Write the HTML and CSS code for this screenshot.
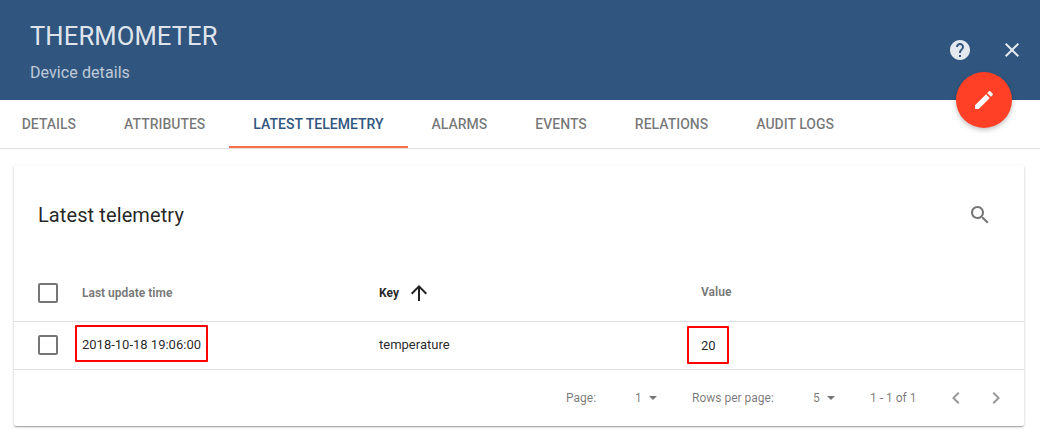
FILE: index.html
```html
<!DOCTYPE html>
<html lang="en">
<head>
<meta charset="utf-8">
<title>Device details</title>
<link rel="stylesheet" href="styles.css">
</head>
<body>
<header class="toolbar">
  <div class="heading">
    <h1 class="title">THERMOMETER</h1>
    <p class="subtitle">Device details</p>
  </div>
  <div class="actions">
    <svg class="icon" viewBox="0 0 24 24"><path d="M12 2C6.48 2 2 6.48 2 12s4.48 10 10 10 10-4.48 10-10S17.52 2 12 2zm1 17h-2v-2h2v2zm2.07-7.75l-.9.92C13.45 12.9 13 13.5 13 15h-2v-.5c0-1.1.45-2.1 1.17-2.83l1.24-1.26c.37-.36.59-.86.59-1.41 0-1.1-.9-2-2-2s-2 .9-2 2H8c0-2.21 1.79-4 4-4s4 1.79 4 4c0 .88-.36 1.68-.93 2.25z"/></svg>
    <svg class="icon" viewBox="0 0 24 24"><path d="M19 6.41L17.59 5 12 10.59 6.41 5 5 6.41 10.59 12 5 17.59 6.41 19 12 13.41 17.59 19 19 17.59 13.41 12z"/></svg>
  </div>
  <button class="fab" aria-label="Edit"><svg class="icon" viewBox="0 0 24 24"><path d="M3 17.25V21h3.75L17.81 9.94l-3.75-3.75L3 17.25zM20.71 7.04c.39-.39.39-1.02 0-1.41l-2.34-2.34c-.39-.39-1.02-.39-1.41 0l-1.83 1.83 3.75 3.75 1.83-1.83z"/></svg></button>
</header>
<nav class="tabs">
  <a class="tab">DETAILS</a>
  <a class="tab">ATTRIBUTES</a>
  <a class="tab active">LATEST TELEMETRY</a>
  <a class="tab">ALARMS</a>
  <a class="tab">EVENTS</a>
  <a class="tab">RELATIONS</a>
  <a class="tab">AUDIT LOGS</a>
</nav>
<main class="card">
  <div class="card-head">
    <h2 class="card-title">Latest telemetry</h2>
    <svg class="icon" viewBox="0 0 24 24"><path d="M15.5 14h-.79l-.28-.27C15.41 12.59 16 11.11 16 9.5 16 5.91 13.09 3 9.5 3S3 5.91 3 9.5 5.91 16 9.5 16c1.61 0 3.09-.59 4.23-1.57l.27.28v.79l5 4.99L20.49 19l-4.99-5zm-6 0C7.01 14 5 11.99 5 9.5S7.01 5 9.5 5 14 7.01 14 9.5 11.99 14 9.5 14z"/></svg>
  </div>
  <div class="row row-head">
    <span class="checkbox"></span>
    <span>Last update time</span>
    <span class="sorted">Key <svg class="icon" viewBox="0 0 24 24"><path d="M4 12l1.41 1.41L11 7.83V20h2V7.83l5.58 5.59L20 12l-8-8-8 8z"/></svg></span>
    <span class="value-head">Value</span>
  </div>
  <div class="row row-body">
    <span class="checkbox"></span>
    <span class="cell">2018-10-18 19:06:00<i class="mark mark-time"></i></span>
    <span class="cell">temperature</span>
    <span class="cell cell-value">20<i class="mark mark-value"></i></span>
  </div>
  <footer class="pager">
    <span class="page-label">Page:</span>
    <span class="select select-page">1<i class="caret"></i></span>
    <span class="rows-label">Rows per page:</span>
    <span class="select select-rows">5<i class="caret"></i></span>
    <span class="range">1 - 1 of 1</span>
    <svg class="icon chevron" viewBox="0 0 24 24"><path d="M15.41 7.41L14 6l-6 6 6 6 1.41-1.41L10.83 12z"/></svg>
    <svg class="icon chevron" viewBox="0 0 24 24"><path d="M10 6L8.59 7.41 13.17 12l-4.58 4.59L10 18l6-6z"/></svg>
  </footer>
</main>
</body>
</html>
```
FILE: styles.css
```css
* { box-sizing: border-box; }
body { margin: 0; height: 437px; overflow: hidden; background: #fff; font-family: Roboto, "Liberation Sans", sans-serif; color: rgba(0,0,0,.87); }
.icon { display: block; width: 24px; height: 24px; fill: currentColor; flex: none; }
.toolbar { position: relative; display: flex; justify-content: space-between; height: 100px; padding: 0 16px 0 30px; background: #305680; color: rgba(255,255,255,.87); }
.heading { padding-top: 20px; }
.title { margin: 0; font-size: 25.6px; line-height: 32px; font-weight: 400; letter-spacing: .1px; }
.subtitle { margin: 11px 0 0; font-size: 16px; line-height: 20px; letter-spacing: .08px; color: rgba(255,255,255,.7); }
.actions { display: flex; gap: 28px; align-items: center; }
.fab { position: absolute; right: 28px; top: 72px; width: 56px; height: 56px; padding: 16px; border: 0; border-radius: 50%; background: #ff4026; color: #fff; box-shadow: 0 2px 5px rgba(0,0,0,.26); }
.tabs { display: flex; height: 49px; margin-left: -2.3px; border-bottom: 1px solid #e0e0e0; }
.tab { padding: 0 24px; font-size: 14px; line-height: 49px; font-weight: 500; color: rgba(0,0,0,.54); white-space: nowrap; }
.tab.active { color: #305680; border-bottom: 2px solid #ff6e4a; }
.card { margin: 16px 16px 0 14px; height: 261px; border-radius: 2px; background: #fff; box-shadow: 0 1px 3px 0 rgba(0,0,0,.2), 0 1px 1px 0 rgba(0,0,0,.14), 0 2px 1px -1px rgba(0,0,0,.12); }
.card-head { display: flex; align-items: center; justify-content: space-between; height: 100px; padding: 0 32px 0 24px; color: rgba(0,0,0,.54); }
.card-title { margin: 0; font-size: 20px; font-weight: 400; letter-spacing: .1px; color: rgba(0,0,0,.87); }
.row { display: grid; grid-template-columns: 44px 297px 322px 1fr; align-items: center; padding-left: 24px; border-bottom: 1px solid #e0e0e0; }
.row-head { height: 57px; font-size: 12px; font-weight: 700; color: rgba(0,0,0,.54); }
.row-body { height: 48px; padding-bottom: 1px; font-size: 13px; }
.checkbox { width: 20px; height: 20px; border: 2px solid rgba(0,0,0,.54); border-radius: 2px; }
.sorted { display: flex; align-items: center; gap: 8px; color: rgba(0,0,0,.87); }
.value-head { padding-bottom: 2px; }
.cell { position: relative; padding-bottom: 1px; line-height: 15px; }
.cell-value { padding: 1px 0 0; }
.mark { position: absolute; border: 2px solid #f00; border-radius: 1px; }
.mark-time { left: -7px; top: -12px; width: 133px; height: 37px; }
.mark-value { left: -14px; top: -11px; width: 42px; height: 38px; }
.pager { display: flex; align-items: center; height: 56px; padding-right: 16px; justify-content: flex-end; font-size: 12px; color: rgba(0,0,0,.54); white-space: nowrap; }
.page-label { width: 69px; }
.select { display: flex; align-items: center; justify-content: space-between; width: 22px; }
.select-page { margin-right: 35px; }
.rows-label { width: 121px; }
.select-rows { margin-right: 35px; }
.caret { border: 4px solid transparent; border-top-color: currentColor; border-bottom: 0; }
.range { width: 74px; }
.chevron { opacity: .75; }
.chevron + .chevron { margin-left: 16px; }
```
